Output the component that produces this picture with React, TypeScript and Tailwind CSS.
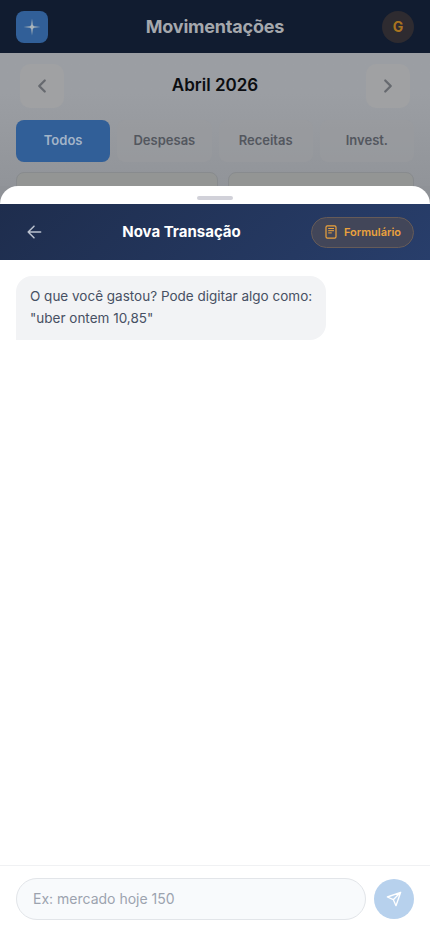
import type { ReactNode } from "react";

const tabs = ["Todos", "Despesas", "Receitas", "Invest."];

function NavButton({ label, children }: { label: string; children: ReactNode }) {
  return (
    <button
      aria-label={label}
      className="flex size-11 items-center justify-center rounded-[10px] bg-[#a0a1a3] text-[#66696f]"
    >
      {children}
    </button>
  );
}

function Chevron({ points }: { points: string }) {
  return (
    <svg width="22" height="22" viewBox="0 0 24 24" fill="none" stroke="currentColor" strokeWidth="2.5" strokeLinecap="round" strokeLinejoin="round">
      <polyline points={points} />
    </svg>
  );
}

function Movements() {
  return (
    <div className="h-[186px] shrink-0 overflow-hidden bg-linear-to-b from-[#9b9ea3] from-50% to-[#919499]">
      <header className="flex h-[53px] items-center justify-between bg-[#111c30] px-4">
        <div className="flex size-8 items-center justify-center rounded-lg bg-[#315f98]">
          <svg width="18" height="18" viewBox="0 0 16 16" fill="#a9b4bb">
            <path d="M8 .5 8.7 6.2 9.8 7.3 15.5 8 9.8 8.7 8.7 9.8 8 15.5 7.3 9.8 6.2 8.7 .5 8 6.2 7.3 7.3 6.2Z" />
          </svg>
        </div>
        <h1 className="text-[18px] font-bold tracking-[-0.2px] text-[#a5a8ad]">Movimentações</h1>
        <div className="flex size-8 items-center justify-center rounded-full bg-[#2e2b30] text-sm font-bold text-[#aa741f]">G</div>
      </header>
      <div className="flex h-[67px] items-center justify-between px-5 pb-[2px]">
        <NavButton label="Mês anterior">
          <Chevron points="15 18 9 12 15 6" />
        </NavButton>
        <h2 className="text-[17px] font-semibold text-[#0b0d10]">Abril 2026</h2>
        <NavButton label="Próximo mês">
          <Chevron points="9 18 15 12 9 6" />
        </NavButton>
      </div>
      <div className="grid grid-cols-4 gap-[7px] px-4">
        {tabs.map((tab, i) => (
          <button
            key={tab}
            className={
              i === 0
                ? "h-[42px] rounded-lg bg-[#315f98] text-[13px] font-semibold text-[#a3b4c8]"
                : "h-[42px] rounded-lg bg-[#999b9f]/60 text-[13px] font-semibold text-[#53575e]"
            }
          >
            {tab}
          </button>
        ))}
      </div>
      <div className="mt-[10px] flex gap-[10px] px-4">
        <div className="h-20 w-[202px] rounded-lg border border-[#888b8e] bg-[#939594]" />
        <div className="h-20 flex-1 rounded-lg border border-[#888b8e] bg-[#939594]" />
      </div>
    </div>
  );
}

function FormIcon() {
  return (
    <svg width="14" height="14" viewBox="0 0 14 14" fill="none" stroke="currentColor" strokeLinecap="round">
      <rect x="2" y="0.8" width="10" height="12.4" rx="1.4" strokeWidth="1.2" />
      <path d="M4.6 3.5h5M4.6 5.7h5M4.6 7.9h2.8" />
    </svg>
  );
}

export default function App() {
  return (
    <div className="flex h-[929px] w-[430px] flex-col overflow-hidden bg-white font-['Inter',sans-serif]">
      <Movements />
      <div className="flex min-h-0 flex-1 flex-col">
        <div className="h-[18px] shrink-0 bg-[#8f9297]">
          <div className="flex h-full justify-center rounded-t-[20px] bg-white pt-[10px]">
            <div className="h-1 w-9 rounded-full bg-[#d1d1d9]" />
          </div>
        </div>
        <header className="flex h-14 shrink-0 items-center justify-between bg-linear-135 from-[#1e2d4d] to-[#283e6b] px-4">
          <div className="flex w-[103px]">
            <button aria-label="Voltar" className="flex size-9 items-center justify-center text-[#bbc2cf]">
              <svg width="20" height="20" viewBox="0 0 24 24" fill="none" stroke="currentColor" strokeWidth="1.8" strokeLinecap="round" strokeLinejoin="round">
                <path d="M20 12H5M12 19l-7-7 7-7" />
              </svg>
            </button>
          </div>
          <h2 className="mr-[67px] text-[15px] font-bold text-white">Nova Transação</h2>
          <button className="flex h-[31px] w-[103px] items-center justify-center gap-[6px] rounded-full border border-[#665b58] bg-[#424659] text-[11px] font-semibold text-[#eba23d]">
            <FormIcon />
            Formulário
          </button>
        </header>
        <main className="flex-1 px-4 pt-4">
          <p className="h-16 w-[310px] rounded-2xl rounded-bl-none bg-[#f2f3f5] px-[14px] pt-[9px] text-[13.5px] leading-[22px] whitespace-nowrap text-[#475063]">
            O que você gastou? Pode digitar algo como:
            <br />
            "uber ontem 10,85"
          </p>
        </main>
        <footer className="flex h-16 shrink-0 items-center gap-2 border-t border-[#f0f1f3] px-4 pt-[3px]">
          <input
            placeholder="Ex: mercado hoje 150"
            className="h-[42px] min-w-0 flex-1 rounded-full border border-[#e2e5e9] bg-[#f8fafc] px-4 pb-[2px] text-sm text-gray-700 placeholder:text-[#9ca3af]"
          />
          <button aria-label="Enviar" className="flex size-10 items-center justify-center rounded-full bg-[#b7d1ed] text-white">
            <svg width="16" height="16" viewBox="0 0 24 24" fill="none" stroke="currentColor" strokeWidth="2" strokeLinecap="round" strokeLinejoin="round">
              <path d="M22 2 11 13M22 2l-7 20-4-9-9-4Z" />
            </svg>
          </button>
        </footer>
      </div>
    </div>
  );
}
